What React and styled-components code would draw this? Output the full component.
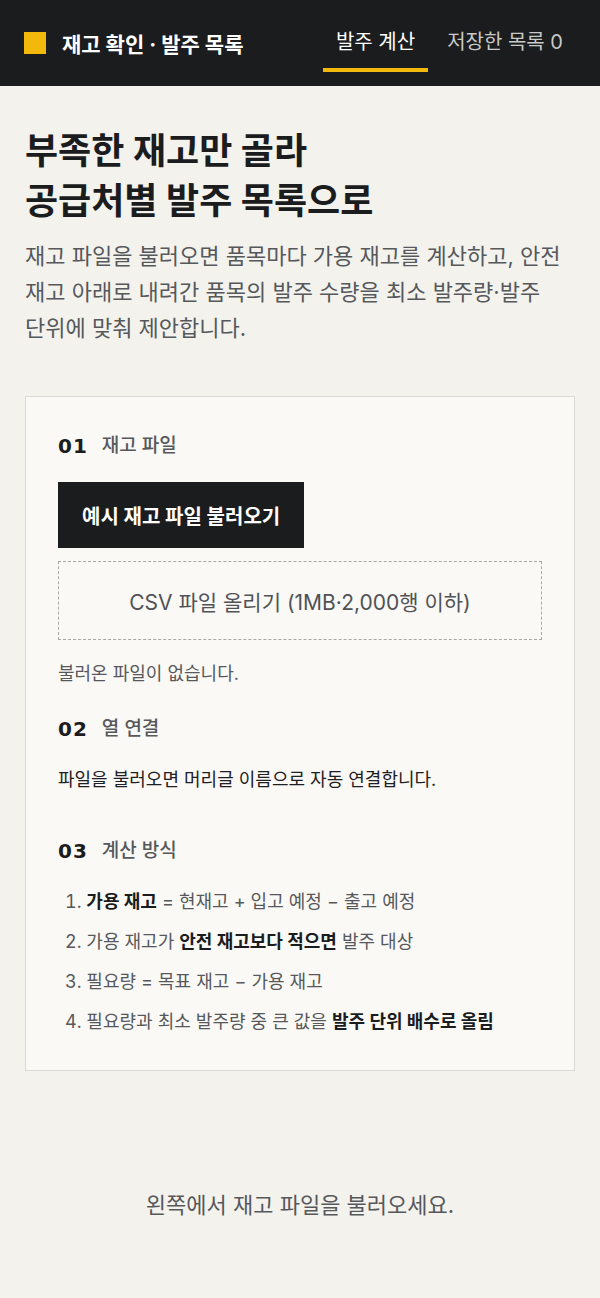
import React from 'react';
import styled, { createGlobalStyle } from 'styled-components';

const GlobalStyle = createGlobalStyle`
  * {
    box-sizing: border-box;
  }

  body {
    margin: 0;
    background: #f3f2ed;
    font-family: Inter, "Noto Sans CJK KR", sans-serif;
    color: #1c1d1f;
    word-break: keep-all;
  }
`;

const Page = styled.div`
  min-height: 100vh;
  background: #f3f2ed;
`;

const TopBar = styled.header`
  height: 86px;
  display: flex;
  align-items: center;
  justify-content: space-between;
  padding: 0 24px;
  background: #1b1c1e;
`;

const Brand = styled.div`
  display: flex;
  align-items: center;
  gap: 16px;
  color: #ffffff;
  font-size: 21px;
  font-weight: 700;
`;

const BrandMark = styled.span`
  width: 22px;
  height: 22px;
  background: #f2b90c;
`;

const Nav = styled.nav`
  display: flex;
  align-items: center;
  gap: 6px;
`;

const Tab = styled.a`
  display: block;
  padding: 15px 13px 13px;
  line-height: 26px;
  font-size: 20px;
  color: ${({ $active }) => ($active ? '#ffffff' : '#c9c9c6')};
  border-bottom: 4px solid ${({ $active }) => ($active ? '#f2b90c' : 'transparent')};
  cursor: pointer;
`;

const Hero = styled.section`
  padding: 40px 25px 0;
`;

const Title = styled.h1`
  margin: 0;
  font-size: 36px;
  line-height: 50px;
  font-weight: 700;
  color: #1b1c1e;
`;

const Lead = styled.p`
  margin: 12px 0 0;
  font-size: 22px;
  line-height: 36px;
  color: #56585c;
`;

const Card = styled.div`
  margin: 50px 25px 0;
  padding: 37px 32px 36px;
  background: #faf9f6;
  border: 1px solid #dcdad4;
`;

const Section = styled.section`
  margin-top: ${({ $space }) => $space || 0}px;
`;

const StepHead = styled.h2`
  margin: 0 0 24px;
  display: flex;
  align-items: center;
  gap: 14px;
  line-height: 24px;
`;

const StepNo = styled.span`
  font-family: "DejaVu Sans", sans-serif;
  font-size: 20px;
  font-weight: 700;
  letter-spacing: 1px;
  color: #1b1c1e;
`;

const StepName = styled.span`
  font-size: 19px;
  font-weight: 500;
  color: #56585c;
`;

const PrimaryButton = styled.button`
  display: block;
  height: 66px;
  padding: 0 24px;
  border: none;
  background: #1b1c1e;
  color: #ffffff;
  font-family: inherit;
  font-size: 20px;
  font-weight: 700;
  cursor: pointer;
`;

const DropZone = styled.label`
  margin-top: 13px;
  height: 79px;
  display: flex;
  align-items: center;
  justify-content: center;
  border: 1px dashed #a8a8a6;
  font-size: 21px;
  color: #505256;
  cursor: pointer;
`;

const Note = styled.p`
  margin: ${({ $top }) => $top || 0}px 0 0;
  font-size: 18px;
  line-height: ${({ $lh }) => $lh || 24}px;
  color: ${({ $dark }) => ($dark ? '#1f2023' : '#56585c')};
`;

const Steps = styled.ol`
  margin: 0;
  padding: 3px 0 0 7px;
  list-style: decimal inside;
  display: flex;
  flex-direction: column;
  gap: 16px;
`;

const StepItem = styled.li`
  font-size: 18px;
  line-height: 24px;
  color: #56585c;

  strong {
    font-weight: 700;
    color: #1b1c1e;
  }
`;

const Empty = styled.div`
  padding: 119px 24px 78px;
  text-align: center;
  font-size: 22px;
  line-height: 30px;
  color: #56585c;
`;

export default function App() {
  return (
    <Page>
      <GlobalStyle />
      <TopBar>
        <Brand>
          <BrandMark />
          재고 확인 · 발주 목록
        </Brand>
        <Nav>
          <Tab $active>발주 계산</Tab>
          <Tab>저장한 목록 0</Tab>
        </Nav>
      </TopBar>

      <Hero>
        <Title>
          부족한 재고만 골라
          <br />
          공급처별 발주 목록으로
        </Title>
        <Lead>
          재고 파일을 불러오면 품목마다 가용 재고를 계산하고, 안전 재고 아래로 내려간 품목의 발주 수량을 최소 발주량·발주 단위에 맞춰 제안합니다.
        </Lead>
      </Hero>

      <Card>
        <Section>
          <StepHead>
            <StepNo>01</StepNo>
            <StepName>재고 파일</StepName>
          </StepHead>
          <PrimaryButton>예시 재고 파일 불러오기</PrimaryButton>
          <DropZone>CSV 파일 올리기 (1MB·2,000행 이하)</DropZone>
          <Note $top={22}>불러온 파일이 없습니다.</Note>
        </Section>

        <Section $space={31}>
          <StepHead>
            <StepNo>02</StepNo>
            <StepName>열 연결</StepName>
          </StepHead>
          <Note $dark $lh={30}>파일을 불러오면 머리글 이름으로 자동 연결합니다.</Note>
        </Section>

        <Section $space={44}>
          <StepHead>
            <StepNo>03</StepNo>
            <StepName>계산 방식</StepName>
          </StepHead>
          <Steps>
            <StepItem>
              <strong>가용 재고</strong> = 현재고 + 입고 예정 − 출고 예정
            </StepItem>
            <StepItem>
              가용 재고가 <strong>안전 재고보다 적으면</strong> 발주 대상
            </StepItem>
            <StepItem>필요량 = 목표 재고 − 가용 재고</StepItem>
            <StepItem>
              필요량과 최소 발주량 중 큰 값을 <strong>발주 단위 배수로 올림</strong>
            </StepItem>
          </Steps>
        </Section>
      </Card>

      <Empty>왼쪽에서 재고 파일을 불러오세요.</Empty>
    </Page>
  );
}
